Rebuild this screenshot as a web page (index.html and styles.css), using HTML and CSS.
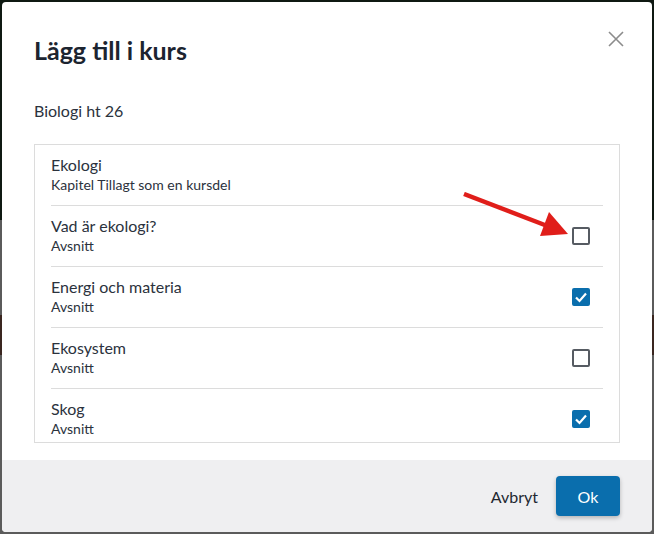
FILE: index.html
```html
<!DOCTYPE html>
<html lang="sv">
<head>
    <meta charset="UTF-8">
    <meta name="viewport" content="width=device-width, initial-scale=1.0">
    <title>Lägg till i kurs</title>
    <link rel="stylesheet" href="styles.css">
</head>
<body>
    <div class="modal">
        <div class="modal-header">
            <h1>Lägg till i kurs</h1>
            <button class="close" aria-label="Stäng">
                <svg width="16" height="16" viewBox="0 0 16 16">
                    <path d="M1 1 L15 15 M15 1 L1 15" stroke="#8c8c8c" stroke-width="1.6" fill="none"/>
                </svg>
            </button>
        </div>

        <div class="modal-body">
            <p class="course">Biologi ht 26</p>

            <div class="parts">
                <div class="part">
                    <div class="part-text">
                        <div class="part-title">Ekologi</div>
                        <div class="part-sub">Kapitel Tillagt som en kursdel</div>
                    </div>
                </div>
                <div class="part">
                    <div class="part-text">
                        <div class="part-title">Vad är ekologi?</div>
                        <div class="part-sub">Avsnitt</div>
                    </div>
                    <span class="check"></span>
                </div>
                <div class="part">
                    <div class="part-text">
                        <div class="part-title">Energi och materia</div>
                        <div class="part-sub">Avsnitt</div>
                    </div>
                    <span class="check checked">
                        <svg width="14" height="14" viewBox="0 0 14 14"><path d="M2 7.5 L5.5 11 L12 3.5" stroke="#fff" stroke-width="2.2" fill="none"/></svg>
                    </span>
                </div>
                <div class="part">
                    <div class="part-text">
                        <div class="part-title">Ekosystem</div>
                        <div class="part-sub">Avsnitt</div>
                    </div>
                    <span class="check"></span>
                </div>
                <div class="part">
                    <div class="part-text">
                        <div class="part-title">Skog</div>
                        <div class="part-sub">Avsnitt</div>
                    </div>
                    <span class="check checked">
                        <svg width="14" height="14" viewBox="0 0 14 14"><path d="M2 7.5 L5.5 11 L12 3.5" stroke="#fff" stroke-width="2.2" fill="none"/></svg>
                    </span>
                </div>
            </div>
        </div>

        <div class="modal-footer">
            <button class="btn-link">Avbryt</button>
            <button class="btn-primary">Ok</button>
        </div>

        <!-- röd pil som pekar på rutan -->
        <svg class="pointer" width="120" height="50" viewBox="0 0 120 50">
            <path d="M2 2 L88 35" stroke="#e01e1a" stroke-width="4.5" fill="none"/>
            <polygon points="106,42 87,20 78,44" fill="#e01e1a"/>
        </svg>
    </div>
</body>
</html>
```

FILE: styles.css
```css
body {
    margin: 0;
    font-family: Lato, "Open Sans", sans-serif;
    background: linear-gradient(to bottom, #0f1912 0, #0f1912 220px, #5b5b5b 220px, #5b5b5b 315px, #3a2620 315px, #3a2620 355px, #5b5b5b 355px);
    height: 534px;
    overflow: hidden;
}
.modal {
    position: relative;
    margin: 2px;
    width: 650px;
    height: 530px;
    background: #fff;
    border-radius: 4px;
    overflow: hidden;
    display: flex;
    flex-direction: column;
}
.modal-header {
    display: flex;
    justify-content: space-between;
    align-items: flex-start;
    padding: 32px 28px 0 32px;
}
.modal-header h1 {
    margin: 0;
    font-size: 25px;
    line-height: 32px;
    font-weight: 700;
    color: #1c2430;
}
.close {
    background: none;
    border: none;
    padding: 0;
    margin-top: -3px;
    cursor: pointer;
}
.modal-body {
    padding: 0 32px;
    flex: 1;
}
.course {
    margin: 35px 0 0;
    font-size: 16px;
    line-height: 20px;
    color: #2b323d;
}
.parts {
    margin-top: 23px;
    border: 1px solid #dcdcdc;
    height: 297px;
    overflow: hidden;
}
.part {
    display: flex;
    align-items: center;
    justify-content: space-between;
    margin: 0 16px;
    padding: 10px 13px 10px 0;
    height: 40px;
    border-bottom: 1px solid #dcdcdc;
}
.part-title {
    font-size: 16px;
    line-height: 20px;
    color: #2b323d;
}
.part-sub {
    font-size: 14px;
    line-height: 20px;
    color: #2b323d;
}
.check {
    width: 18px;
    height: 18px;
    box-sizing: border-box;
    border: 2px solid #565b62;
    border-radius: 2px;
    display: flex;
    align-items: center;
    justify-content: center;
}
.check.checked {
    background: #0a6ead;
    border-color: #0a6ead;
}
.modal-footer {
    height: 72px;
    background: #efeff1;
    display: flex;
    align-items: center;
    justify-content: flex-end;
    gap: 18px;
    padding: 0 32px;
}
.btn-link {
    background: none;
    border: none;
    padding: 0;
    font-family: inherit;
    font-size: 16px;
    color: #222831;
    cursor: pointer;
}
.btn-primary {
    background: #0a6ead;
    color: #fff;
    border: none;
    border-radius: 4px;
    width: 64px;
    height: 40px;
    font-family: inherit;
    font-size: 16px;
    box-shadow: 0 2px 4px rgba(0,0,0,0.25);
    cursor: pointer;
}
.pointer {
    position: absolute;
    left: 460px;
    top: 190px;
}
```
